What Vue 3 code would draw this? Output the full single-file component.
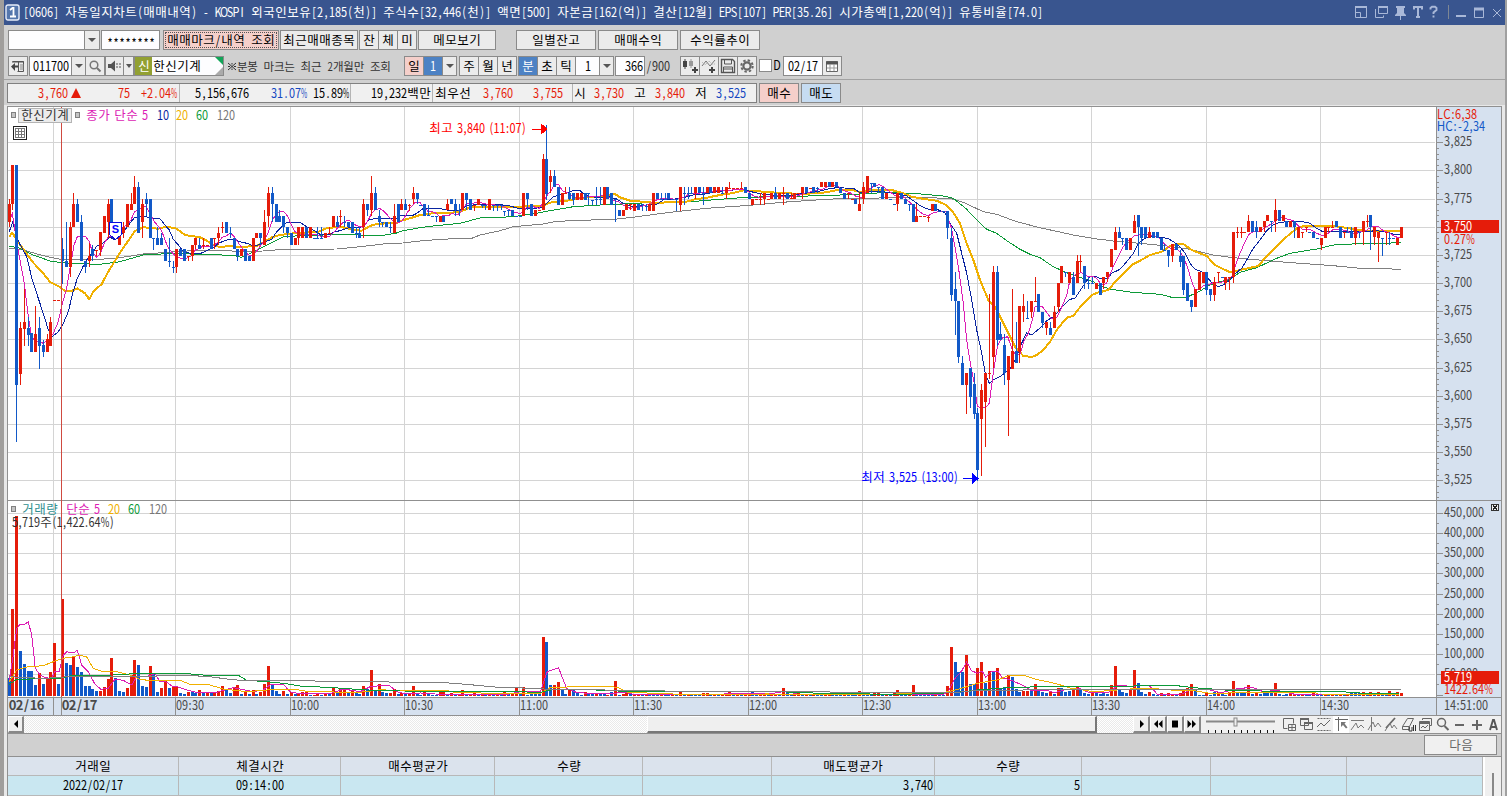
<script setup>
import { h } from 'vue'

/* Fixed-pitch terminal text: full-width syllables and half-width latin cells. */
const isWide = (c) => c.charCodeAt(0) > 0x2000
const cellWidth = (c, { prop, bold, tight }) => {
  if (isWide(c)) return tight ? 10.4 : 12
  if (bold) return 7
  if (!prop) return tight ? 5.8 : 6
  if (',.: '.includes(c)) return 4
  if ('()'.includes(c)) return 4.6
  if ('CH'.includes(c)) return 8
  if (c === '%') return 9
  return 6
}
const Txt = (props) => {
  const runs = []
  let x = 0
  for (const c of props.s) {
    const w = cellWidth(c, props)
    const wide = isWide(c)
    let k = wide || props.bold ? 1 : 0.84
    if (c === '%') k = props.prop ? 0.72 : 0.52
    if (props.prop && 'CH'.includes(c)) k = 0.9
    let run = runs[runs.length - 1]
    if (!run || run.wide !== wide || run.k !== k) {
      run = { wide, k, t: '', xs: [], dy: c === '*' ? 3 : 0 }
      runs.push(run)
    }
    run.t += c
    run.xs.push(((x + w / 2) / k).toFixed(2))
    x += w
  }
  return h(
    'svg',
    {
      class: ['txt', props.bold ? 'txt-b' : ''],
      width: x,
      height: 14,
      x: props.x,
      y: props.y === undefined ? undefined : props.y - 1,
    },
    runs.map((r) =>
      h(
        'text',
        {
          x: r.xs.join(' '),
          y: 11.6 + r.dy,
          'font-size': props.tight ? 11.5 : r.wide ? 12.5 : 13,
          transform: r.k === 1 ? undefined : `scale(${r.k} 1)`,
        },
        r.t
      )
    )
  )
}
Txt.props = { s: String, prop: Boolean, bold: Boolean, tight: Boolean, x: [Number, String], y: [Number, String] }

/* Chart sections: origin and horizontal units per pixel; vertical is 3 units per pixel. */
const P = [
  [0, 140, 3], [400, 100, 3], [640, 165, 3], [840, 170, 3], [1100, 100, 3],
]
const V = [[0, 495, 3], [400, 600, 2.851], [900, 600, 2.583]]

/* Candles: colour+x, body top, body bottom, high, low. */
const candleData = [
  `r28,192,245,178,262 r37,75,192,75,210 b49,75,735,75,905 r61,565,702,547,735 r73,547,567,447,618 b85,565,584,532,618 b94,580,635 r106,582,635,498,635 b118,565,618,532,686 b130,615,635,600,651 r142,598,635,582,635 r151,547,618,532,618 r163,481 r175,481 b187,328,363,295,431 b199,363,380,245,380 r211,262,380,245,412 r220,192,262,160,262 b232,192,245,178,245 b244,245,363,225,363 b256,363,380,363,398 r268,347,363,310,380 b277,328,347,315,363 r289,329,329,329,347 r301,277,329,277,347 r313,227,278 r325,192,245,178,295 b337,178,250 b349,245,278 r358,278,314 r370,262,278,245,295 r382,192,262 r394,192,210,160,210 r403,142,192,108,192 b415,142,278,127,278 r427,192,245,178,295 b439,178,192,160,228 b451,178,295 b463,295,295,295,330 b472,295,314,262,314 b484,295,314,280,314 b496,328,363 b508,363,363,295,380 b520,380,380,363,398 r529,328,380,328,398 b541,328,347 b553,328,363 r565,347,347,347,363 r577,314,347,314,363 r586,295,314,295,328 b598,314,328,295,328 r610,314,314,295,328 r622,314 b634,295,328 r646,295,295,295,328 r655,278,295,262,314 r667,262,262,245,278 b679,245,278 b691,278,278,262,295 b703,295,328 b712,328,347,328,363 r724,328,347 b736,328,363 b748,347,363 r760,295,363 r772,278,295 b781,278,295,278,314 r793,245,314,210,314 r805,160,228,142,262 b817,160,192,142,245 b829,192,245 b838,228,245,210,245 b850,228,262,228,278 b862,262,278,262,295 b874,278,314 r886,295,314 r898,262,295,262,314 r907,262,295 b919,262,295 r931,262,295 b943,295 b955,295,295,262,295 b967,295,295,262,295 r976,278,295 r988,278,278,262,278 r1000,228,262 b1012,245,262,228,262 r1021,228,228,210,262 b1033,245,245,228,262 b1045,245,262 b1057,245,278 b1069,278,278,262,295 b1081,278,295,262,295 r1090,192,262,178,295 b1102,192,210,192,228 r1114,160,210,108,228 b1126,160,210,142,210 b1138,228,245,210,262 b1147,245,245,245,262 b1159,245,262 b1171,262,262,245,278 r1183,228,278,192,278 b1195,192,245`,
  `r7,312,330,297,330 b15,312,330,297,330 r29,314,314,312,332 r40,280,297,262,312 b52,280,297,280,312 b63,314 b73,312,347 b85,345,345,314,347 b97,347 b109,347,347,347,365 r121,347,365 b133,347,365 r142,312,330,297,330 b154,297,312 b166,312,330,297,347 b178,330,330,312,347 r190,280,330 b199,280,300,280,330 b211,297,330 r223,314,314,314,332 r235,297,314 b247,314,314,314,325 b256,314,314,314,330 r268,297,330 b280,314,314,314,332 b292,314,314,314,332 b301,314,314,314,330 b313,332,332,332,347 b325,330,330,330,347 b337,330,347 b349,347 b361,347 r373,280,347 b382,280,297,280,330 b397,312,347 r406,330,347 r418,330 r430,178,330,162,330 b442,178,282,75,300 r451,228,247,210,280 b463,228,262,210,262 b475,262,314 r487,280,314 r499,280,280,262,280 b508,280,297,262,300 b520,280,300,280,314 r532,280,300 r544,280,300 b556,280,300 b568,280,280,280,314 b577,300,300,300,314 b589,297,297,262,314 b601,297,297,262,314 r613,262,314 b625,262,297 b637,280,314 b646,297,297,297,365 b658,330,347 r670,330,347 r682,312,330 r691,312,312,312,330 r703,312,332 b715,312,330`,
  `b5,117,117,117,137 b18,123,123,117,137 r29,117,137 r40,84,137 b52,84,103 b64,103,103,84,103 b76,103,103,84,103 b88,84,103 b98,103 b109,103,103,103,137 r121,66,120,66,137 b133,84,84,66,120 b145,84,84,66,103 b157,84,84,66,84 r168,66,84,66,103 b179,66,84 b190,84,84,66,120 r202,66,84 b214,66,84 r225,66,84 r236,66,84 b248,84,84,66,84 r260,66,84,66,103 r271,68,68,50,68 r282,68 r293,68 r304,68,68,50,68 b316,66,84 b328,84,103 r340,103,120 r351,103 r362,103,103,84,120 r373,84,103,84,120 r385,103 r397,84,103 b409,84,103,66,103 r420,84,103 r431,84,84,66,120 b443,84,103 r454,100,100,84,103 r466,84,103 r476,84 r488,66,84,66,103 b499,66,84 r511,68 b523,66,84 b534,68,68,66,84 r546,50,66 r557,50,66 b569,50,66 r580,50,66 b592,50,66`,
  `b3,53,70 b13,70,88 r25,70,70,70,88 r37,88 b49,88,103 r58,103,122,70,122 r70,52,88,35,103 r82,18,70 b94,38,38,38,70 b106,38,52 b118,52,52,52,70 b127,52,88 r139,70,88 b151,88 b163,103 r175,70,103,70,122 b184,70,88 b196,88,103 b208,103,103,103,122 b220,103,155 r232,137,155,103,155 r244,137 r256,137 r265,140,140,137,155 r277,103,122 b289,103,122 b301,122 b313,122 b322,122,173,122,207 b334,205,375,173,392 b346,358,392,307,494 b358,392,560,392,578 b370,578,645,558,645 r379,610,645,610,732 b391,595,682,595,713 b403,643,732,610,747 b415,730,900,713,932 r427,660,747,643,918 r436,610,696,610,832 r448,610,610,373,627 r460,307,560,288,595 b472,307,510,288,528 b484,493,510,457,510 b493,525,610,493,645 r505,558,630,558,798 r517,543,597,357,597 b529,543,578,457,578 r541,408,545,408,578 r553,408,425,373,457 b562,443,443,392,443 r574,392,425,392,443 r586,392,392,322,392 b598,373,425 b610,425,460,425,475 r619,457,475,457,494 b631,475,494,457,494 r643,425,475,408,475 r655,340,410,340,425 r667,288,340 b679,307,307,307,322 r688,307,340 b700,322,375,307,375 r712,273,340,255,340 r724,273,273,255,305 b736,288,340,288,358 b746,340,340,322,358 b757,340,340,322,340 r769,340,358`,
  `b2,550,585 r13,532,550,532,567 r25,515,532,515,547 r34,447,500 r46,397,450,382,450 b58,397,415,382,415 b70,415,415,415,435 b82,415,450 r91,415,450 r103,363,398,345,398 b115,345,382,345,467 b127,382,415,382,435 b139,382,415 r148,397,415,382,415 b160,397,415 b172,397,415 b184,415,450 b196,450,450,432,450 b208,450,467,450,500 r217,432,467,432,485 b229,432,450 b241,467,485,450,500 b253,467,570,467,585 b265,550,602 b274,600,620,600,635 r286,567,620 r298,517,570 r310,517,550 b322,517,570,517,585 b334,567,585,567,602 r343,547,585,532,602 r355,517,517,517,550 b367,532 r379,532,550,532,570 r391,532,532,532,570 r400,397,532,397,550 r412,397,397,382,415 r424,397,397,382,415 r436,397 r448,363,397,345,397 b460,363,397 b469,382,397,363,415 r481,382,397 r493,363,382,363,397 r505,345,363 b517,363,363,363,397 r526,330,363,297,397 b538,330,363 r550,345,363 b562,363,382 r574,363,382 b583,363,382,363,415 r595,382,415 r607,397,397,397,415 r619,382,382,382,397 b631,397 b643,397,415 b652,415 r664,415,435,415,450 r676,382,415 r688,382,382,382,397 r700,382,382,363,382 b709,363,382 b721,382,415 r733,397,397,397,415 b745,397,397,382,397 b757,397,415,382,415 r769,382,415,382,435 b780,397,397,397,415 r790,363,397,363,435 r802,363,363,345,382 b814,345,382,345,450 r826,382,410,382,435 r835,397,415,397,485 b847,415,415,415,467 r859,397,397,397,435 b871,415,415,397,435 b883,415 r895,415,435 r904,382,415`,
]
const volumeData = [
  `b28,549 r37,342 r49,63 b61,468 b73,507 b85,528 b94,528 b106,570 r118,534 b130,567 r142,550 r151,531 r163,444 b175,567 r187,312 b199,504 b211,510 r220,486 b232,516 b244,531 b256,573 b268,573 b277,582 b289,588 r301,588 r313,576 r325,552 r337,489 b349,549 b358,588 b370,591 r382,579 r394,540 r403,495 b415,510 b427,573 b439,576 r451,513 b463,537 b472,591 r484,579 r496,555 b508,579 r520,573 r529,573 b541,594 b553,597 r565,591 b577,588 b586,594 r598,585 b610,592 r622,592 b634,591 r646,591 r655,588 r667,573 b679,583 b691,594 r703,576 r712,570 b724,597 r736,588 b748,597 r760,585 b772,597 r781,590 r793,567 r805,513 b817,570 b829,588 b838,597 r850,588 b862,597 r874,592 b886,597 r898,597 r907,590 r919,587 b931,599 r943,600 r955,594 b967,600 r976,594 b988,596 r1000,576 b1012,592 r1021,580 r1033,580 b1045,592 r1057,586 b1069,594 b1081,597 r1090,573 b1102,582 r1114,525 b1126,585 r1138,567 b1147,591 b1159,594 r1171,594 r1183,582 b1195,597`,
  `r7,279 b17,279 r28,282 r38,258 b50,282 b61,285 r70,276 b81,279 b92,285 b103,286 r115,276 r126,276 b137,283 r148,278 b159,283 r170,282 r181,271 b192,282 r203,282 r213,280 b224,282 r235,280 b246,283 r257,282 b268,284 r279,282 b289,283 r300,274 b311,282 r321,282 r332,264 b343,280 r354,261 b365,285 b376,282 b387,280 b398,282 r409,111 b420,126 b429,255 r440,255 r452,246 b463,268 b474,282 r483,270 b494,270 b505,275 b517,286 r529,276 b540,280 b550,283 r561,278 b572,280 b583,280 r593,284 b604,276 r614,243 b626,286 r637,282 r648,276 b658,279 r670,284 r681,283 b691,283 r702,284 b713,280 b724,280 b735,282 r745,284 b756,286 b767,286 r778,286 b789,286 r799,276 b810,286 r821,284 b832,285 b843,284 b853,285 r865,280 r876,279 b887,286 r898,284 b909,284 r920,284 r931,282 r942,276 b953,282 r964,282 b975,282 r986,280 r996,282 b1007,276 b1018,284 r1028,279 r1039,280 b1050,280 r1061,282 r1072,282 b1083,282 r1093,264 b1105,276 b1116,282 r1127,278 r1137,278 b1148,284 r1159,282 b1170,285 r1181,284 b1192,285 b1203,284 r1214,285 r1225,284 b1236,286 b1247,285 b1257,285 r1268,285 b1279,284 b1290,284 b1300,282 r1310,273 b1321,282 b1332,280 b1343,284 r1354,280 r1365,280 b1376,284 r1387,284 b1398,282 r1409,280 r1420,270`,
  `b4,278 b15,282 r25,276 r35,255 b45,280 b55,280 b64,280 b74,280 b84,280 r94,280 b104,282 b114,284 r123,258 r133,141 b143,186 b154,216 b164,216 r172,165 b182,252 b192,252 r203,204 r213,186 b221,249 r231,213 b241,216 r252,204 b262,264 b271,264 r280,225 b290,231 b301,267 b311,276 r321,273 r330,273 b339,270 r350,252 b360,267 b370,276 b379,279 r390,273 b399,282 r409,264 b419,264 b429,276 b439,273 r448,264 r459,261 b469,270 b479,279 b488,282 r498,276 b508,276 b518,282 b527,280 b537,282 r546,255 r557,198 b567,267 b576,276 b587,279 r597,267 r606,210 b616,249 b626,276 b635,283 r645,276 b655,282 b665,285 r675,279 b685,284 r695,279 r706,284 b715,284 r725,280 r734,270 r743,265 r753,252 b764,267 b774,285 b784,286 r794,279 b803,284 b813,276 r823,276 b833,282 b842,285 r852,276 r861,243 b872,276 b882,276 b892,276 r903,255 b913,282 r921,276 b931,282 b942,278 b951,279 b960,276 r970,249 b981,282 b992,285 b1002,282 r1013,280 r1023,284 b1032,284 r1042,282 b1052,284 b1062,285 r1072,276 b1082,284 b1092,284 r1102,284 b1112,285 r1122,283 b1132,284 r1142,282 b1150,282 r1160,282 b1170,280 b1180,280 b1189,280 r1198,276 b1209,280 r1218,276 b1228,282 r1237,276 b1248,280 b1258,280 r1267,273 b1276,280 r1286,276 r1296,279`,
]

const snapX = (x) => Math.floor(9 + 3.8148 * Math.round((x - 9.3) / 3.8148))
const parse = (data, sections) =>
  data.flatMap((str, k) => {
    const [ox, oy, sx] = sections[k]
    return str.split(/\s+/).map((t) => {
      const n = t.slice(1).split(',').map(Number)
      return { up: t[0] === 'r', x: snapX(ox + n[0] / sx), ys: n.slice(1).map((v) => Math.round(oy + v / 3)) }
    })
  })

const paths = (list, toPath) => {
  const out = { r: '', b: '' }
  for (const c of list) out[c.up ? 'r' : 'b'] += toPath(c)
  return out
}
const box = (x, y, w, hh) => `M${x} ${y}h${w}v${hh}h${-w}z`
const candles = paths(parse(candleData, P), ({ x, ys }) => {
  const [top, bottom = top, high = top, low = bottom] = ys
  return box(x - 1, top, 3, Math.max(1, bottom - top)) + box(x, high, 1, Math.max(1, low - high))
})
const volumes = paths(parse(volumeData, V), ({ x, ys }) => box(x - 1, ys[0], 3, Math.max(1, 696 - ys[0])))

const line = (data, sections) =>
  data
    .map((str, k) => {
      const [ox, oy, sx] = sections[k]
      return str
        .split(' ')
        .map((p) => {
          const [x, y] = p.split(',').map(Number)
          return `${(ox + x / sx).toFixed(1)},${(oy + y / 3).toFixed(1)}`
        })
        .join(' ')
    })
    .join(' ')

const priceLines = [
  { c: 'ma120', d: [
    '28,325 70,330 130,347 180,358 300,358 360,353 430,342 560,333 640,331 720,334 790,333 850,328 1010,327 1080,320 1150,312 1195,309',
    '0,430 60,423 120,418 200,415 210,417 240,405 300,392 340,380 430,372 460,366 520,361 630,359 700,352',
    '0,154 90,142 200,130 330,121 450,110 560,103 598,101',
    '0,87 200,82 330,85 370,97 430,125 470,133 530,155 600,173 700,195 775,208',
    '0,418 40,423 140,432 200,438 270,448 340,465 400,473 500,482 600,490 700,497 780,505 850,505 903,509'] },
  { c: 'ma60', d: [
    '28,318 60,325 100,345 150,363 200,370 300,373 360,365 430,345 520,340 590,343 700,346 725,352 745,343 800,315 850,290 900,287 1000,284 1150,286 1195,278',
    '0,394 60,383 100,378 180,370 240,354 340,350 410,340 450,332 520,320 600,315 715,310',
    '18,113 150,110 240,103 320,97 450,94 560,92 598,90',
    '0,75 130,68 220,70 310,78 340,85 380,118 410,150 440,178 470,190 500,212 540,238 570,253 600,263 640,290 680,308 720,322 760,335 778,347',
    '5,560 35,568 95,577 180,583 215,592 260,592 300,573 330,555 350,547 385,540 420,517 470,503 530,475 570,460 650,447 710,433 860,430 903,427'] },
  { c: 'ma20', d: [
    '28,290 37,278 50,300 70,328 100,368 130,400 150,426 175,438 195,453 215,453 232,445 255,460 268,478 280,455 305,432 325,395 345,362 365,330 385,302 405,273 430,262 475,266 500,260 530,266 555,285 600,292 620,302 640,315 660,321 690,318 720,321 770,318 795,305 815,292 840,285 880,280 955,275 980,265 1020,260 1050,267 1085,272 1110,258 1130,252 1160,250 1190,250',
    '0,363 30,355 60,345 110,338 150,338 180,336 210,322 250,320 300,322 360,320 400,318 425,318 450,308 475,304 500,302 530,296 560,292 600,290 645,282 660,292 690,302 715,304',
    '20,112 45,113 100,112 140,110 165,103 200,98 240,90 280,84 310,76 370,80 420,84 490,87 560,82 595,74',
    '0,60 35,60 60,66 100,60 155,60 190,70 215,80 240,85 290,92 318,105 340,128 360,160 380,220 400,270 420,330 445,390 465,410 485,450 505,490 525,530 550,558 575,561 590,555 610,540 630,515 650,480 680,443 700,438 725,405 755,375 775,367',
    '5,575 25,570 50,540 75,515 95,495 120,482 150,465 185,455 215,435 250,432 275,450 320,468 345,495 390,517 430,508 475,498 500,468 530,440 560,410 590,385 615,377 665,379 700,378 750,385 765,390 800,392 900,393'] },
  { c: 'ma10', d: [
    '28,275 38,245 49,290 61,315 80,350 97,420 115,475 133,530 145,570 157,590 175,575 190,550 205,515 218,460 232,415 250,378 265,352 280,335 290,318 310,308 330,292 345,299 360,290 375,270 390,250 403,233 430,228 445,232 460,236 480,236 495,255 508,270 520,298 535,315 550,335 570,340 600,341 620,332 645,320 655,310 680,300 700,297 720,305 740,310 760,317 780,314 800,303 815,298 830,275 845,260 860,248 900,247 920,260 945,273 960,283 985,285 1005,275 1020,272 1050,262 1080,262 1095,252 1110,238 1140,235 1190,236',
    '0,347 35,348 50,340 70,325 120,326 140,330 180,330 200,318 240,312 290,312 330,318 358,326 400,326 430,320 445,305 460,290 480,284 500,278 520,272 540,272 555,285 590,293 625,290 650,297 670,310 690,318 710,320',
    '18,120 50,118 70,105 100,103 130,98 160,90 190,88 230,80 270,76 310,72 340,82 370,88 410,92 450,92 480,86 520,82 550,76 570,70 598,68',
    '13,54 40,55 60,68 90,65 130,65 170,72 200,78 220,92 240,107 265,118 290,118 315,128 330,160 350,190 365,250 380,310 395,390 410,480 425,550 436,610 448,640 460,630 480,620 500,605 515,590 530,560 545,520 560,488 575,495 590,482 605,470 620,452 640,440 655,425 670,407 690,388 705,385 720,362 735,340 750,320 770,320',
    '0,535 25,535 35,520 60,508 80,485 100,460 115,430 130,418 150,408 185,412 205,416 220,425 240,440 255,460 270,490 285,508 305,515 320,530 335,548 355,560 370,555 390,540 405,522 425,505 440,480 460,445 480,420 500,392 520,375 540,367 565,365 600,363 630,370 650,385 668,395 700,394 730,396 760,393 790,395 830,392 850,395 880,402 900,402'] },
  { c: 'ma5', d: [
    '28,250 37,218 49,300 61,365 73,430 85,530 94,585 103,600 112,603 130,610 145,600 160,580 175,545 187,490 199,450 211,380 222,315 232,290 256,289 268,305 277,335 290,352 301,340 313,310 325,290 337,290 349,270 370,262 385,250 394,238 403,216 427,202 439,200 451,222 463,245 478,262 487,278 499,310 508,328 523,345 541,355 560,355 577,346 586,330 598,325 610,318 640,318 655,305 667,292 679,288 691,278 703,290 715,308 727,325 739,340 751,347 765,340 781,318 793,302 805,278 817,240 829,222 841,214 853,216 865,232 874,255 885,275 898,283 919,283 950,283 965,290 988,290 1000,278 1012,265 1030,247 1045,240 1057,248 1069,257 1090,262 1102,245 1114,222 1126,210 1138,205 1150,212 1162,225 1175,240 1190,250',
    '7,362 18,345 30,325 45,308 60,308 73,322 85,335 97,335 109,340 120,350 133,345 145,347 157,340 170,345 180,340 190,325 199,312 223,309 235,305 250,310 268,314 300,316 320,325 340,335 360,341 370,335 380,322 400,320 418,325 430,305 442,285 451,275 463,255 475,252 487,272 505,280 520,290 540,296 560,290 590,290 613,285 640,300 655,305 670,315 690,325 710,322',
    '18,120 40,112 52,103 76,100 109,103 130,98 150,85 180,84 200,82 230,76 260,78 290,72 310,72 325,80 340,92 360,98 385,95 410,92 440,97 470,94 490,85 515,80 530,76 550,72 570,62 590,62',
    '13,62 30,68 50,80 65,82 82,62 95,52 118,44 130,50 150,66 170,80 190,80 205,93 220,108 235,122 250,133 265,137 280,128 300,124 318,126 334,172 346,235 358,310 370,400 380,510 391,580 403,640 412,710 425,713 436,713 448,700 460,610 472,530 484,505 503,500 517,540 529,555 541,550 553,510 565,490 577,450 586,408 605,408 620,427 635,447 650,442 665,412 680,375 690,330 705,315 724,307 740,318 757,318 770,325 785,345 800,340',
    '25,535 40,500 55,470 70,440 85,422 103,408 127,403 145,405 160,408 175,412 190,428 205,442 220,447 235,450 250,470 262,500 274,540 285,570 298,567 310,558 325,555 340,548 360,548 380,540 395,530 405,500 420,460 435,425 448,402 460,395 480,393 500,380 520,368 540,352 560,357 580,362 595,378 610,390 630,388 650,400 668,407 685,400 700,388 720,388 740,393 765,403 780,395 800,390 815,380 835,380 850,392 870,400 885,410 900,413'] },
].map((l) => ({ c: l.c, pts: line(l.d, P) }))

const volumeLines = [
  { c: 'ma5', d: [
    '28,555 40,480 50,400 60,388 75,387 85,381 95,420 106,520 120,540 135,548 155,550 165,528 178,528 190,480 200,470 220,474 232,466 245,510 265,530 285,568 303,583 325,580 345,553 370,556 395,570 410,545 445,543 465,536 480,560 495,558 515,573 535,576 560,585 590,592 650,592 700,578 760,590 790,585 810,570 850,568 870,590 900,597 990,596 1030,582 1080,590 1110,575 1165,570 1195,592',
    '10,280 60,279 100,282 180,284 300,284 340,276 400,275 420,215 452,203 475,265 500,276 540,281 600,282 640,276 660,282 740,284 850,284 1000,280 1050,282 1100,274 1140,284 1300,284 1400,282',
    '4,282 110,284 125,275 140,238 160,212 172,186 185,212 200,220 212,213 222,232 235,216 252,213 265,235 280,238 300,247 320,258 340,272 375,270 400,278 430,268 465,266 490,278 540,276 565,255 600,260 620,255 645,258 665,283 730,282 750,268 800,270 830,278 870,266 910,262 940,276 970,270 1020,283 1180,284 1290,282'] },
  { c: 'ma20v', d: [
    '28,560 50,525 80,516 130,512 165,498 190,490 215,486 240,480 260,486 280,520 310,530 350,530 390,540 420,553 460,558 540,556 570,568 630,570 670,582 740,590 800,585 890,584 930,590 1070,592 1100,590 1140,584 1195,587',
    '5,271 130,271 160,278 300,280 400,280 430,262 590,259 620,262 650,277 800,283 1050,282 1080,284 1400,284',
    '5,280 120,276 150,268 200,250 250,240 285,226 320,226 350,238 400,250 440,264 500,275 540,272 580,268 640,264 700,270 760,272 800,280 900,278 1070,276 1080,282 1290,283'] },
  { c: 'ma60', d: [
    '28,568 50,553 180,550 220,541 340,540 420,535 560,536 620,541 715,541 740,556 800,560 860,566 900,573 1000,578 1100,585 1195,586',
    '0,273 270,274 400,277 430,270 540,269 640,274 800,276 1050,274 1200,280 1400,283',
    '5,283 140,278 200,270 290,262 440,259 570,260 640,256 715,257 760,263 850,271 930,273 1140,275 1200,280 1290,281'] },
  { c: 'ma120', d: [
    '28,545 80,548 130,550 170,548 200,545 470,543 580,542 630,545 680,552 720,556 890,557 1000,559 1160,560 1195,564',
    '0,247 130,248 200,254 270,261 330,263 430,268 650,271 800,274 1400,277',
    '5,277 150,277 200,271 600,268 1293,268'] },
].map((l) => ({ c: l.c, pts: line(l.d, V) }))

const hours = ['09:30', '10:00', '10:30', '11:00', '11:30', '12:00', '12:30', '13:00', '13:30', '14:00', '14:30']
  .map((t, i) => ({ t, x: Math.round(175 + i * 114.5) }))
const prices = Array.from({ length: 13 }, (_, i) => ({
  y: Math.round(142.2 + i * 28.17),
  t: (3825 - i * 25).toString().replace(/^3/, '3,'),
}))
/* The current price box takes the place of the 3,750 label. */
const priceLabels = prices.filter((p) => p.t !== '3,750')
const priceTicks = Array.from({ length: 68 }, (_, i) => Math.round(136.6 + i * 5.634)).filter((y) => y < 499)
const volumesAxis = Array.from({ length: 9 }, (_, i) => ({ y: Math.round(512.8 + i * 20.2), t: `${450 - i * 50},000` }))

const headers = ['거래일', '체결시간', '매수평균가', '수량', '', '매도평균가', '수량', '', '', '']
const row = ['2022/02/17', '09:14:00', '', '', '', '3,740', '5', '', '', '']
</script>

<template>
  <div class="window">
    <header class="title">
      <svg class="badge" width="15" height="17" viewBox="0 0 15 17">
        <rect x="1" y="1" width="13" height="15" rx="2" fill="#5577ad" stroke="#e8eefa" stroke-width="1.4" />
        <path d="M5 6l2.5-2h1v8M5 12.5h6" fill="none" stroke="#fff" stroke-width="1.8" />
      </svg>
      <Txt s="[0606] 자동일지차트(매매내역) - KOSPI 외국인보유[2,185(천)] 주식수[32,446(천)] 액면[500] 자본금[162(억)] 결산[12월] EPS[107] PER[35.26] 시가총액[1,220(억)] 유통비율[74.0]" />
      <svg class="controls" width="152" height="24" viewBox="1352 0 152 24" fill="none" stroke="#a9b8d8">
        <path d="M1355.5 7.5h11v10h-11zM1355.5 12.5h5v5" />
        <path d="M1355 7h12" stroke-width="2" />
        <path d="M1378.500 6.500h9v7h-9zM1375.500 9v8.500h8v-2" />
        <path d="M1378 7h10" stroke-width="2" />
        <path d="M1396 6h9v2h-1v5l2 2v1h-11v-1l2-2V8h-1zM1400 15h1v5h-1z" fill="#a9b8d8" stroke="none" />
        <path d="M1414 9.500V7h8v2.500M1418 7v10M1416 17h4" stroke-width="2" />
        <path d="M1430.500 9.500V8l1.500-1.300h3l1.500 1.300v2l-3 2.500v1.500M1433.500 15.500v2" stroke-width="1.900" />
        <path d="M1448.500 5v14" stroke="#7e8794" />
        <path d="M1456 16h10" stroke-width="2" />
        <path d="M1474.500 9.500h9v8h-9z" /><path d="M1474 9h10" stroke-width="3" />
        <path d="M1493 9l8 8m0-8l-8 8" />
      </svg>
    </header>

    <div class="bar bar1">
      <div class="field c1"><i class="dd"></i></div>
      <div class="field c2"><Txt s="********" /></div>
      <div class="btn pink c3 focus"><Txt s="매매마크/내역 조회" /></div>
      <div class="btn c4"><Txt s="최근매매종목" /></div>
      <div class="group g3"><div class="btn"><Txt s="잔" /></div><div class="btn"><Txt s="체" /></div><div class="btn"><Txt s="미" /></div></div>
      <div class="btn c5"><Txt s="메모보기" /></div>
      <div class="btn c6 first"><Txt s="일별잔고" /></div>
      <div class="btn c6"><Txt s="매매수익" /></div>
      <div class="btn c6"><Txt s="수익률추이" /></div>
    </div>

    <div class="bar bar2">
      <div class="btn icon w20">
        <svg width="14" height="14" viewBox="0 0 14 14"><path d="M1.500 2.500h11v10h-6M1 3h12M7.500 3v9" fill="none" stroke="#555" /><path d="M10 5v6M12 5v6" stroke="#888" /><path d="M0 7.500l4-3.500v2.500h3v2H4V12z" fill="#444" /></svg>
      </div>
      <div class="group code">
        <div class="field num"><Txt s="011700" /></div><div class="btn arrow"><i class="tri"></i></div>
        <div class="btn w20"><svg width="14" height="14" viewBox="0 0 14 14"><circle cx="6" cy="6" r="3.800" fill="none" stroke="#777" stroke-width="1.500" /><path d="M9 9l3.500 3.500" stroke="#777" stroke-width="2" /></svg></div>
      </div>
      <div class="group sound">
        <div class="btn spk"><svg width="14" height="12" viewBox="0 0 14 12"><path d="M0 4h3l4-3.500v11L3 8H0z" fill="#555" /><path d="M9 3v6M12 3v6" stroke="#888" stroke-width="1.500" stroke-dasharray="2 1" /></svg></div>
        <div class="btn arrow sm"><i class="tri"></i></div>
      </div>
      <div class="field stock"><b><Txt s="신" /></b><Txt s="한신기계" /><svg width="8" height="18" viewBox="0 0 8 18"><path d="M0 0h8v8z" fill="#12a558" /><path d="M8 10v8H0z" fill="#aaa" /></svg></div>
      <div class="note"><svg width="8" height="9" viewBox="0 0 8 9" stroke="#333"><path d="M0 1l8 7M8 1L0 8M4 1v1.500M4 6.500V8M0 4.500h2M6 4.500h2" /></svg><Txt tight s="분봉 마크는 최근 2개월만 조회" /></div>
      <div class="group day"><div class="btn pink"><Txt s="일" /></div><div class="btn on"><Txt s="1" /></div><div class="btn arrow"><i class="tri"></i></div></div>
      <div class="group per"><div class="btn"><Txt s="주" /></div><div class="btn"><Txt s="월" /></div><div class="btn"><Txt s="년" /></div></div>
      <div class="group min"><div class="btn on"><Txt s="분" /></div><div class="btn"><Txt s="초" /></div><div class="btn"><Txt s="틱" /></div><div class="field one"><Txt s="1" /></div><div class="btn arrow"><i class="tri"></i></div></div>
      <div class="field cnt"><Txt s="366" /></div>
      <div class="total"><Txt s="/900" /></div>
      <div class="group tools">
        <div class="btn"><svg width="16" height="16" viewBox="0 0 16 16"><path d="M1 3h4v6H1zM2.500 1h1v10h-1z" fill="#444" /><path d="M7 3h4v5H7zM8.500 1h1v9h-1z" fill="#999" /><path d="M10 12h6M13 9v6" stroke="#444" stroke-width="2" /></svg></div>
        <div class="btn"><svg width="16" height="16" viewBox="0 0 16 16"><path d="M1 8l4-5 4 5 5-6" fill="none" stroke="#777" /><path d="M1 4l3 3 4-4 3 3 3 0" fill="none" stroke="#aaa" stroke-dasharray="1 1" /><path d="M8 12h6M11 9v6" stroke="#444" stroke-width="2" /></svg></div>
        <div class="btn"><svg width="16" height="16" viewBox="0 0 16 16" fill="none" stroke="#555"><path d="M1.500 1.500h11l2 2v11h-13z" stroke-width="1.400" /><path d="M4.500 2v4h7V2M3.500 14V9h9v5M4 11h8" /></svg></div>
        <div class="btn"><svg width="14" height="14" viewBox="0 0 14 14"><circle cx="7" cy="7" r="3.600" fill="none" stroke="#666" stroke-width="2.200" /><circle cx="7" cy="7" r="5.700" fill="none" stroke="#666" stroke-width="2" stroke-dasharray="2.400 2.070" /></svg></div>
      </div>
      <div class="check"></div>
      <div class="dlabel"><Txt s="D" /></div>
      <div class="group date"><div class="field"><Txt s="02/17" /></div><div class="btn"><svg width="12" height="12" viewBox="0 0 12 12"><path d="M.5 1.500h11v10H.5z" fill="#fff" stroke="#666" /><path d="M0 3h12" stroke="#555" stroke-width="3" /><path d="M4 4v7M8 4v7M1 8h10" stroke="#999" /></svg></div></div>
    </div>

    <div class="quotes">
      <div class="quote">
        <Txt class="up" s="3,760" /><svg class="upmark" width="10" height="14" viewBox="0 0 10 14"><path d="M5 2l5 10H0z" fill="#e51c0a" /></svg>
        <Txt class="up" s="75" /><Txt class="up" s="+2.04%" />
        <Txt s="5,156,676" /><Txt class="down" s="31.07%" /><Txt s="15.89%" />
        <Txt s="19,232백만" /><Txt s="최우선" /><Txt class="up" s="3,760" /><Txt class="up" s="3,755" />
        <Txt s="시" /><Txt class="up" s="3,730" /><Txt s="고" /><Txt class="up" s="3,840" /><Txt s="저" /><Txt class="down" s="3,525" />
        <i class="v v1"></i><i class="v v2"></i><i class="v v3"></i><i class="v v4"></i>
      </div>
      <div class="btn pink trade"><Txt s="매수" /></div>
      <div class="btn sky trade"><Txt s="매도" /></div>
    </div>

    <div class="frame">
      <svg class="chart" width="1495" height="610" viewBox="7 106 1495 610">
        <rect x="7" y="106" width="1495" height="610" fill="#fff" />
        <rect x="1437" y="107" width="65" height="609" fill="#d6e1ef" />
        <rect x="8" y="698" width="1494" height="17" fill="#d6e1ef" />
        <g fill="#d4d4d4">
          <rect v-for="p in prices" :key="p.t" x="8" :y="p.y" width="1427" height="1" />
          <rect v-for="p in volumesAxis" :key="p.t" x="8" :y="p.y" width="1427" height="1" />
          <rect x="53" y="107" width="1" height="590" />
          <rect v-for="t in hours" :key="t.t" :x="t.x" y="107" width="1" height="590" />
        </g>
        <g fill="#909090">
          <rect x="7" y="106" width="1495" height="1" /><rect x="7" y="106" width="1" height="610" /><rect x="1501" y="106" width="1" height="610" />
          <rect x="7" y="500" width="1495" height="1" /><rect x="7" y="697" width="1495" height="1" /><rect x="7" y="715" width="1495" height="1" />
          <rect x="1436" y="106" width="1" height="609" />
          <rect x="53" y="698" width="1" height="17" /><rect x="61" y="698" width="1" height="17" />
          <rect v-for="t in hours" :key="t.t" :x="t.x" y="698" width="1" height="17" />
          <rect v-for="y in priceTicks" :key="y" x="1437" :y="y" width="2" height="1" />
          <rect v-for="p in prices" :key="p.t" x="1437" :y="p.y" width="6" height="1" />
          <g v-for="p in volumesAxis" :key="p.t"><rect x="1437" :y="p.y" width="6" height="1" /><rect x="1437" :y="p.y + 10" width="2" height="1" /></g>
          <rect x="1437" y="695" width="6" height="1" />
        </g>
        <g fill="none" stroke-linejoin="round">
          <polyline v-for="l in priceLines" :key="l.c" :class="l.c" :points="l.pts" />
        </g>
        <path :d="candles.b" fill="#1259c8" /><path :d="candles.r" fill="#e51c0a" />
        <path :d="volumes.b" fill="#1259c8" /><path :d="volumes.r" fill="#e51c0a" />
        <g fill="none">
          <polyline v-for="l in volumeLines" :key="l.c" :class="l.c" :points="l.pts" />
        </g>
        <rect x="61" y="107" width="1" height="590" fill="#cf4a40" />

        <path d="M109.500 222.500h12v12l-6 5-6-5z" fill="#fff" stroke="#0b0be0" />
        <text x="115.500" y="233" class="mark">S</text>
        <Txt class="hi" prop s="최고 3,840 (11:07)" x="429" y="122" />
        <path d="M532 129h9M541 124v10l6-5z" fill="#f00" stroke="#f00" />
        <Txt class="lo" prop s="최저 3,525 (13:00)" x="861" y="471" />
        <path d="M963 478.500h9M972 473.500v10l6-5z" fill="#00f" stroke="#00f" />

        <g fill="#c4c4c4" stroke="#808080"><rect x="11.500" y="112.500" width="4" height="5" /><rect x="75.500" y="112.500" width="4" height="5" /><rect x="11.500" y="506.500" width="4" height="5" /></g>
        <rect x="18.500" y="108.500" width="53" height="14" fill="#ececec" stroke="#b4b4b4" />
        <Txt class="dark" prop s="한신기계" x="21" y="109" />
        <Txt class="pinkt" prop s="종가 단순 5" x="86" y="109" /><Txt class="navy" prop s="10" x="157" y="109" />
        <Txt class="gold" prop s="20" x="176" y="109" /><Txt class="green" prop s="60" x="196" y="109" /><Txt class="gray" prop s="120" x="217" y="109" />
        <path d="M13.500 126.500h13v13h-13z" fill="#fff" stroke="#222" />
        <path d="M15.500 128.500h9v9h-9zM15.500 131.500h9M15.500 134.500h9M18.500 128.500v9M21.500 128.500v9" fill="none" stroke="#777" />
        <Txt class="teal" prop s="거래량" x="22" y="503" /><Txt class="pinkt" prop s="단순 5" x="66" y="503" />
        <Txt class="gold" prop s="20" x="108" y="503" /><Txt class="green" prop s="60" x="128" y="503" /><Txt class="gray" prop s="120" x="149" y="503" />
        <Txt class="dark" prop s="5,719주(1,422.64%)" x="12" y="516" />

        <Txt class="up" prop s="LC:6,38" x="1437" y="108" /><Txt class="blue" prop s="HC:-2,34" x="1437" y="120" />
        <Txt v-for="p in priceLabels" :key="p.t" class="axis" prop :s="p.t" x="1444" :y="p.y - 7" />
        <Txt v-for="p in volumesAxis" :key="p.t" class="axis" prop :s="p.t" x="1444" :y="p.y - 7" />
        <rect x="1441" y="220" width="58" height="13" fill="#e51c0a" /><Txt class="white" prop s="3,750" x="1444" y="220" />
        <Txt class="up" prop s="0.27%" x="1444" y="233" />
        <rect x="1441" y="671" width="58" height="13" fill="#e51c0a" /><Txt class="white" prop s="5,719" x="1444" y="671" />
        <Txt class="up" prop s="1422.64%" x="1444" y="683" />
        <Txt class="axis" bold s="02/16" x="9" y="699" /><Txt class="axis" bold s="02/17" x="62" y="699" />
        <Txt v-for="t in hours" :key="t.t" class="axis" prop :s="t.t" :x="t.x + 1" y="699" />
        <Txt class="axis" prop s="14:51:00" x="1444" y="699" />
        <path d="M1491.500 504.500h7v6h-7z" fill="#eee" stroke="#333" /><path d="M1493 505.500l4 4m0-4l-4 4" stroke="#222" />
      </svg>

      <div class="scroll">
        <div class="sbtn"><svg width="8" height="10" viewBox="0 0 8 10"><path d="M6 1v8L2 5z" /></svg></div>
        <div class="track t1"></div><div class="thumb"></div><div class="track t2"></div>
        <div class="sbtn"><svg width="8" height="10" viewBox="0 0 8 10"><path d="M3 1v8l4-4z" /></svg></div>
        <div class="sbtn"><svg width="10" height="10" viewBox="0 0 10 10"><path d="M5 1v8L1 5zM9.500 1v8l-4-4z" /></svg></div>
        <div class="sbtn"><svg width="10" height="10" viewBox="0 0 10 10"><path d="M2 1.500h6v7H2z" /></svg></div>
        <div class="sbtn"><svg width="10" height="10" viewBox="0 0 10 10"><path d="M5 1v8l4-4zM.5 1v8l4-4z" /></svg></div>
        <svg class="slider" width="300" height="17" viewBox="1201 716 300 17" fill="none" stroke="#666">
          <path d="M1206 721.500h69" stroke="#888" stroke-width="2" />
          <rect x="1234" y="718" width="3" height="8" fill="#eee" stroke="#888" />
          <path d="M1208.500 730v3M1215.500 730v3M1221.500 730v3M1228.500 730v3M1234.500 730v3M1241.500 730v3M1247.500 730v3M1254.500 730v3M1260.500 730v3M1267.500 730v3M1273.500 730v3" stroke="#111" />
          <path d="M1283.500 718.500h10v5M1283.500 718.500v10h4M1288.500 724.500h7v6h-7zM1292 724v7M1288 727.500h8" />
          <path d="M1300.500 718.500h8v7h-8zM1304.500 722.500h8v7h-8z" fill="#f0f0f0" /><path d="M1300 719h9M1304 723h9" stroke-width="2" />
          <path d="M1317.500 718.500h13M1317.500 730.500h13" stroke-dasharray="2 1" /><path d="M1317 727l4-4 3 3 6-6" />
          <rect x="1333" y="716" width="16" height="17" fill="#fff" stroke="none" />
          <path d="M1335 719.500h13M1338.500 717v14" /><path d="M1341 722h5l-1.500 1.500 3 4-1.500 1-3-3.500-2 2z" fill="#777" stroke="none" />
          <path d="M1351 720.500h13M1351 730l5-7 2 5 3-3 3 3" stroke="#777" />
          <path d="M1371.500 717v14M1368 730l5-8 2 5 3-4 3 4" stroke="#777" />
          <path d="M1386 728l9-10" stroke-width="1.800" /><path d="M1385 731l5-8 2 5 2-3 3 4" stroke="#777" />
          <path d="M1402.500 726.500l5-8h6l-4 8v3h-7zM1402.500 726.500h7" /><path d="M1409 727v4h3v-4M1413.500 725v6M1415.500 725v6" stroke="#333" />
          <path d="M1422.500 720v-1.500h9v7h-2" /><path d="M1419.500 721.500h10v9h-10z" fill="#eee" /><path d="M1419 723h11" stroke-width="2" /><path d="M1421 728l2-2 2 2 3-3" />
          <circle cx="1441.500" cy="722.500" r="4" stroke-width="1.500" /><path d="M1444.500 726l4 4" stroke-width="2" />
          <path d="M1455 725h9M1472 725h10M1477 720v10" stroke-width="2" />
          <path d="M1490 730l3-10h1l3 10M1491 727h5" stroke="#555" stroke-width="1.900" />
        </svg>
      </div>
      <div class="next"><div class="btn"><Txt s="다음" /></div></div>
      <div class="grid">
        <div class="cells head"><div v-for="(t, i) in headers" :key="i"><Txt v-if="t" :s="t" /></div></div>
        <div class="vs"><i></i></div>
        <div class="cells data"><div v-for="(t, i) in row" :key="i" :class="{ right: i > 4 }"><Txt v-if="t" :s="t" /></div></div>
      </div>
    </div>
  </div>
</template>

<style>
html, body { overflow: hidden; background: #d0d0d0; }
.txt { display: block; flex: none; overflow: visible; }
.txt text { font-family: "Noto Sans CJK KR", sans-serif; fill: currentColor; text-anchor: middle; white-space: pre; }
.txt-b text { font-weight: 700; }
</style>

<style scoped>
* { box-sizing: border-box; }
.window { width: 1507px; height: 796px; overflow: hidden; background: #d0d0d0; color: #000; border-left: 4px solid #a09e9c; border-right: 2px solid #a0a0a0; }
.title { height: 25px; margin: 0 -2px 0 -3px; padding-bottom: 1px; background: #39558f; display: flex; align-items: center; color: #fff; }
.badge { margin: 1px 3px 0 4px; }
.controls { margin-left: auto; margin-right: 3px; }
.bar { display: flex; height: 20px; padding-left: 4px; }
.bar > * { flex: none; }
.bar1 { margin-top: 5px; }
.bar2 { margin-top: 6px; }
.btn { background: #ebebeb; border: 1px solid #8a8a8a; display: flex; align-items: center; justify-content: center; height: 20px; }
.field { background: #fdfdff; border: 1px solid #8a8a8a; display: flex; align-items: center; justify-content: center; height: 20px; }
.pink { background: #f5cfca; }
.sky { background: #c6dcf2; }
.on { background: #4d82c4; color: #fff; }
.group { display: flex; }
.group > * + * { margin-left: -1px; }
.c1 { width: 92px; justify-content: flex-end; }
.dd { width: 15px; height: 18px; border-left: 1px solid #8a8a8a; background: #ebebeb; display: flex; align-items: center; justify-content: center; }
.dd::after, .tri { content: ""; border: 4px solid transparent; border-top: 4px solid #555; border-bottom: 0; }
.c2 { width: 59px; margin-left: 1px; }
.c3 { width: 116px; margin-left: 3px; }
.focus { outline: 1px dotted #555; outline-offset: -3px; }
.c4 { width: 78px; margin-left: 1px; }
.g3 { margin-left: 1px; }
.g3 .btn { width: 20px; }
.c5 { width: 78px; margin-left: 1px; }
.c6 { width: 80px; margin-left: 2px; }
.c6.first { margin-left: 20px; }
.w20 { width: 20px; }
.code { margin-left: 1px; }
.num { width: 43px; }
.arrow { width: 15px; }
.arrow.sm { width: 11px; }
.arrow.sm .tri { border-left-width: 3px; border-right-width: 3px; }
.sound { margin-left: 0; }
.spk { width: 19px; }
.stock { width: 90px; margin-left: 0; justify-content: flex-start; gap: 1px; }
.stock b { width: 17px; height: 18px; background: #92a032; color: #fff; font-weight: 400; display: flex; align-items: center; justify-content: center; }
.stock > svg:last-child { margin-left: auto; }
.note { width: 180px; padding-left: 4px; display: flex; align-items: center; gap: 1px; color: #333; }
.note > svg { flex: none; }
.day .btn { width: 20px; }
.day .arrow { width: 15px; }
.per { margin-left: 2px; }
.per .btn { width: 20px; }
.min { margin-left: 1px; }
.min .btn { width: 20px; }
.min .one { width: 25px; }
.min .arrow { width: 15px; }
.cnt { width: 30px; margin-left: 1px; justify-content: flex-end; padding-right: 1px; }
.total { width: 35px; padding-left: 1px; display: flex; align-items: center; color: #333; }
.tools .btn { width: 20px; }
.check { width: 13px; height: 13px; margin: 3px 0 0 2px; background: #fff; border: 1px solid #8a8a8a; }
.dlabel { width: 11px; padding-left: 2px; padding-top: 2px; }
.date .field { width: 40px; }
.date .btn { width: 20px; }
.quotes { display: flex; margin-top: 3px; height: 26px; padding: 3px 0 0 3px; border-top: 1px solid #a2a2a2; margin-right: 0; }
.quote { position: relative; width: 750px; height: 20px; background: #f0f0f0; border: 1px solid #808080; padding-left: 30px; display: grid; align-items: center;
  grid-template-columns: 33px 47px 23px 54px 76px 42px 58px 64px 48px 50px 41px 20px 40px 21px 40px 21px 30px; }
.v { position: absolute; top: 0; width: 1px; height: 18px; background: #b4b4b4; }
.v1 { left: 171px; } .v2 { left: 342px; } .v3 { left: 424px; } .v4 { left: 564px; }
.trade { width: 40px; margin-left: 2px; }
.up { color: #e51c0a; } .down { color: #1547c0; } .blue { color: #1259c8; }
.frame { padding-left: 3px; background: #e8e8e8; margin-right: 0; height: 691px; border-top: 1px solid #e8e8e8; }
.chart { display: block; shape-rendering: crispEdges; margin-top: 0; }
.ma5 { stroke: #dc1cb4; stroke-width: 1; }
.ma10 { stroke: #0a24a0; stroke-width: 1; }
.ma20 { stroke: #f0b000; stroke-width: 2; }
.ma20v { stroke: #f0b000; stroke-width: 1; }
.ma60 { stroke: #0c9a38; stroke-width: 1; }
.ma120 { stroke: #808080; stroke-width: 1; }
.mark { font: bold 11px "Liberation Sans", sans-serif; fill: #00f; text-anchor: middle; }
.hi { color: #f00; } .lo { color: #00f; } .dark { color: #333; } .pinkt { color: #dc1cb4; } .navy { color: #0a24a0; }
.gold { color: #f0b000; } .green { color: #0c9a38; } .gray { color: #777; } .teal { color: #309090; } .axis { color: #4a4a4a; } .white { color: #fff; }
.scroll { display: flex; width: 1495px; height: 18px; background: #f0f0f0; border: solid #909090; border-width: 0 1px 1px; }
.scroll > * { flex: none; }
.sbtn { width: 17px; height: 17px; background: #f0f0f0; border: 1px solid #fff; border-right: 2px solid #888; border-bottom: 2px solid #888; display: flex; align-items: center; justify-content: center; }
.scroll > .sbtn:first-child { width: 16px; }
.track { background: repeating-conic-gradient(#fff 0 25%, #eaeaea 0 50%) 0 0 / 2px 2px; }
.t1 { width: 623px; }
.thumb { width: 450px; background: #efefef; border: 1px solid #fff; border-right: 2px solid #777; border-bottom: 2px solid #777; }
.t2 { width: 36px; }
.slider { display: block; margin-left: 0; }
.next { width: 1495px; height: 22px; background: #d0d0d0; border: solid #909090; border-width: 0 1px; display: flex; justify-content: flex-end; padding: 1px 4px 0 0; }
.next .btn { width: 73px; background: #f0f0f0; color: #666; }
.grid { width: 1495px; height: 40px; border: 1px solid #909090; border-bottom: 0; display: grid; grid-template-columns: 1475px 18px; grid-template-rows: 19px 20px; }
.cells { display: grid; grid-template-columns: 171px 162px 154px 148px 129px 163px 147px 129px 136px 136px; }
.cells > div { display: flex; align-items: center; justify-content: center; border-right: 1px solid #b8b8b8; border-bottom: 1px solid #b8b8b8; background: #dbe3ed; }
.data > div { background: #c9e7f1; padding-bottom: 1px; }
.data > .right { justify-content: flex-end; padding-right: 1px; }
.vs { grid-row: 1 / 3; grid-column: 2; background: #efefef; border-left: 2px solid #fff; padding: 16px 0 0 7px; }
.vs i { display: block; width: 2px; height: 24px; background: #888; }
</style>
